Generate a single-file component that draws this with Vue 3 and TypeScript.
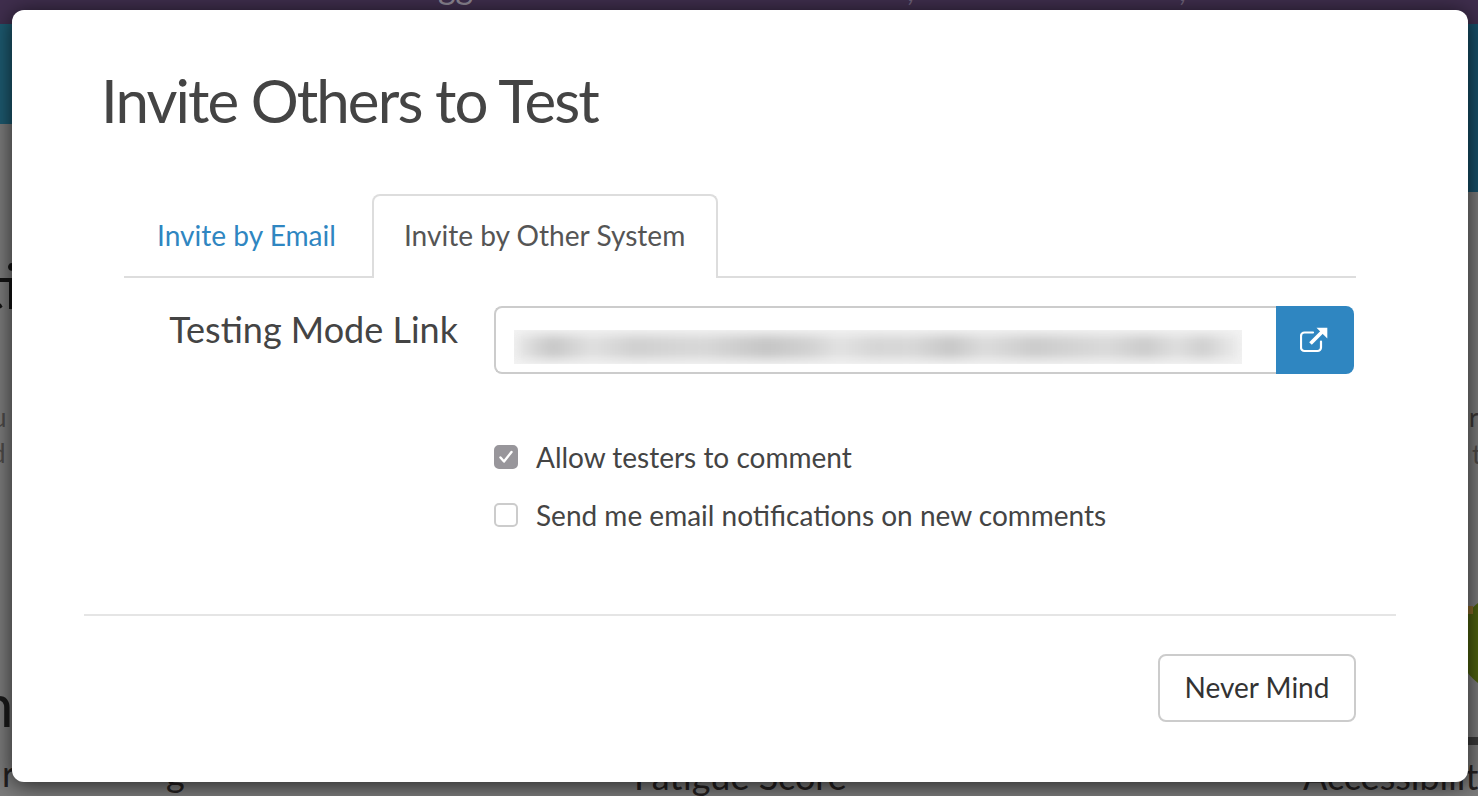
<script setup lang="ts">
const blurStops: string = [
  '#eeeeee 0%', '#d8d8d8 2.5%', '#c8c8c8 5.4%', '#e0e0e0 10.7%', '#d0d0d0 16.7%', '#d6d6d6 22.7%',
  '#d8d8d8 26%', '#c6c6c6 34.700%', '#d2d2d2 40.700%', '#e2e2e2 44.700%', '#d6d6d6 49.400%',
  '#d8d8d8 54.700%', '#c8c8c8 60%', '#dcdcdc 64.700%', '#cccccc 71.400%', '#dadada 81.400%',
  '#cccccc 86.700%', '#dedede 91%', '#d0d0d0 94.700%', '#efefef 100%',
].join(', ')
const blurStyle = { background: `linear-gradient(90deg, ${blurStops})` }
</script>

<template>
  <div class="page">
    <!-- Page behind the dialog -->
    <div class="behind" aria-hidden="true">
      <div class="b-top"></div>
      <div class="b-teal-left"></div>
      <div class="b-teal-right"></div>
      <span class="peek p-gg">gg</span>
      <span class="peek p-c1">,</span>
      <span class="peek p-c2">,</span>
      <span class="peek p-i">ti</span>
      <span class="peek p-u">u</span>
      <span class="peek p-d">d</span>
      <span class="peek p-rr">re</span>
      <span class="peek p-t">t</span>
      <span class="peek p-big">n</span>
      <span class="peek p-r">r</span>
      <span class="peek p-g">g</span>
      <span class="peek p-fat">Fatigue Score</span>
      <span class="peek p-acc">Accessibility</span>
      <div class="green"></div>
      <div class="orange"></div>
      <div class="darkline"></div>
    </div>

    <!-- Dialog -->
    <div class="modal">
      <h1 class="title">Invite Others to Test</h1>

      <div class="tabs">
        <a class="tab">Invite by Email</a>
        <a class="tab active">Invite by Other System</a>
      </div>

      <div class="form-row">
        <label class="row-label">Testing Mode Link</label>
        <div class="input-group">
          <div class="field">
            <div class="blurred"><div class="blur-inner" :style="blurStyle"></div></div>
          </div>
          <button class="open-btn" aria-label="Open link">
            <svg width="30" height="26" viewBox="1 0 30 26" fill="none">
              <path d="M14 5.5H5.5A3.5 3.5 0 0 0 2 9v11.500A3.500 3.500 0 0 0 5.500 24h13a3.500 3.500 0 0 0 3.500-3.500V14.500" stroke="#fff" stroke-width="2.200" stroke-linecap="round"/>
              <path d="M11.500 16.500 23 5" stroke="#fff" stroke-width="3.800"/>
              <path d="M17.500 0.800H28.300V11.600Z" fill="#fff"/>
            </svg>
          </button>
        </div>
      </div>

      <div class="options">
        <label class="option">
          <span class="box checked">
            <svg width="16" height="14" viewBox="0 0 16 14" fill="none">
              <path d="M2.500 7.500 6 11.500 13.500 2" stroke="#fff" stroke-width="2.400" stroke-linecap="round" stroke-linejoin="round"/>
            </svg>
          </span>
          Allow testers to comment
        </label>
        <label class="option">
          <span class="box"></span>
          Send me email notifications on new comments
        </label>
      </div>

      <div class="footer">
        <button class="never">Never Mind</button>
      </div>
    </div>
  </div>
</template>

<style>
html, body {
  margin: 0;
  padding: 0;
  overflow: hidden;
}
</style>

<style scoped>
.page {
  position: relative;
  width: 1478px;
  height: 796px;
  overflow: hidden;
  background: #7b7b7b;
  font-family: Lato, "Open Sans", sans-serif;
}

.behind {
  position: absolute;
  inset: 0;
}
.b-top {
  position: absolute;
  left: 0;
  top: 0;
  width: 100%;
  height: 24px;
  background: #3f2e4d;
}
.b-teal-left {
  position: absolute;
  left: 0;
  top: 24px;
  width: 50%;
  height: 100px;
  background: #1d5a70;
}
.b-teal-right {
  position: absolute;
  right: 0;
  top: 24px;
  width: 50%;
  height: 168px;
  background: #17506a;
}
.peek {
  position: absolute;
  color: #1d1d1d;
  line-height: 1;
  white-space: nowrap;
}
.p-gg { left: 438px; top: -31px; font-size: 34px; color: #8d8794; }
.p-c1 { left: 907px; top: -26px; font-size: 30px; color: #6d6279; }
.p-c2 { left: 1179px; top: -26px; font-size: 30px; color: #6d6279; }
.p-i { left: -19px; top: 254px; font-size: 62px; color: #141414; }
.p-u { left: -8px; top: 404px; font-size: 26px; color: #4d4a48; }
.p-d { left: -9px; top: 440px; font-size: 26px; color: #4d4a48; }
.p-rr { left: 1469px; top: 404px; font-size: 26px; color: #3c3836; }
.p-t { left: 1472px; top: 441px; font-size: 26px; color: #4d4a48; }
.p-big { left: -20px; top: 674px; font-size: 60px; color: #1a1a1a; }
.p-r { left: 2px; top: 755px; font-size: 36px; color: #242020; }
.p-g { left: 166px; top: 755px; font-size: 36px; color: #242020; }
.p-fat { left: 634px; top: 758px; font-size: 36px; color: #242020; }
.p-acc { left: 1303px; top: 758px; font-size: 36px; color: #242020; }
.green {
  position: absolute;
  left: 1458px;
  top: 593px;
  width: 100px;
  height: 100px;
  border-radius: 50%;
  background: #4e610f;
}
.orange {
  position: absolute;
  left: 1468px;
  top: 606px;
  width: 5px;
  height: 8px;
  background: #8a6a2a;
}
.darkline {
  position: absolute;
  left: 1468px;
  top: 737px;
  width: 10px;
  height: 8px;
  background: #3a3a3a;
}

.modal {
  position: absolute;
  left: 12px;
  top: 10px;
  width: 1456px;
  height: 772px;
  box-sizing: border-box;
  padding: 48px 72px 0;
  background: #fff;
  border-radius: 12px;
  box-shadow: 0 3px 22px rgba(0, 0, 0, 0.7);
  color: #444;
}

.title {
  margin: 0 0 0 17px;
  font-size: 60px;
  line-height: 84px;
  font-weight: 400;
  letter-spacing: -1.9px;
  color: #444;
}

.tabs {
  display: flex;
  align-items: flex-end;
  height: 84px;
  margin: 50px 40px 0;
  border-bottom: 2px solid #ddd;
}
.tab {
  box-sizing: border-box;
  height: 84px;
  margin-bottom: -2px;
  padding: 0 34px 0 31px;
  font-size: 28.100px;
  line-height: 78px;
  color: #2f86c1;
  border: 2px solid transparent;
  border-bottom: 0;
}
.tab.active {
  color: #555;
  padding: 0 31px 0 30px;
  border-color: #ddd;
  border-radius: 8px 8px 0 0;
  background: #fff;
}

.form-row {
  display: flex;
  margin-top: 28px;
  height: 68px;
}
.row-label {
  width: 374px;
  flex: none;
  text-align: right;
  font-size: 36px;
  line-height: 46px;
  color: #444;
}
.input-group {
  display: flex;
  margin-left: 36px;
}
.field {
  box-sizing: border-box;
  width: 782px;
  height: 68px;
  border: 2px solid #ccc;
  border-right: 0;
  border-radius: 8px 0 0 8px;
  padding: 22px 0 0 18px;
}
.blurred {
  width: 728px;
  height: 34px;
  overflow: hidden;
  background: #f3f3f3;
}
.blur-inner {
  height: 24px;
  margin: 5px 0 0;
  filter: blur(5px);
}
.open-btn {
  width: 78px;
  height: 68px;
  padding: 0;
  border: 0;
  background: #2f86c1;
  border-radius: 0 8px 8px 0;
  display: flex;
  align-items: center;
  justify-content: center;
}

.options {
  margin: 66px 0 0 410px;
  display: flex;
  flex-direction: column;
  gap: 24px;
}
.option {
  display: flex;
  align-items: center;
  height: 34px;
  font-size: 28px;
  color: #444;
}
.box {
  box-sizing: border-box;
  width: 24px;
  height: 24px;
  margin-right: 18px;
  border: 2px solid #ccc;
  border-radius: 5px;
  background: #fff;
  display: flex;
  align-items: center;
  justify-content: center;
}
.box.checked {
  background: #98969b;
  border-color: #98969b;
}

.footer {
  margin: 82px 0 0;
  border-top: 2px solid #e5e5e5;
  padding-top: 38px;
  display: flex;
  justify-content: flex-end;
  padding-right: 40px;
}
.never {
  box-sizing: border-box;
  width: 198px;
  height: 68px;
  padding: 0 0 2px;
  background: #fff;
  border: 2px solid #ccc;
  border-radius: 8px;
  font-family: inherit;
  font-size: 28px;
  color: #333;
}
</style>
